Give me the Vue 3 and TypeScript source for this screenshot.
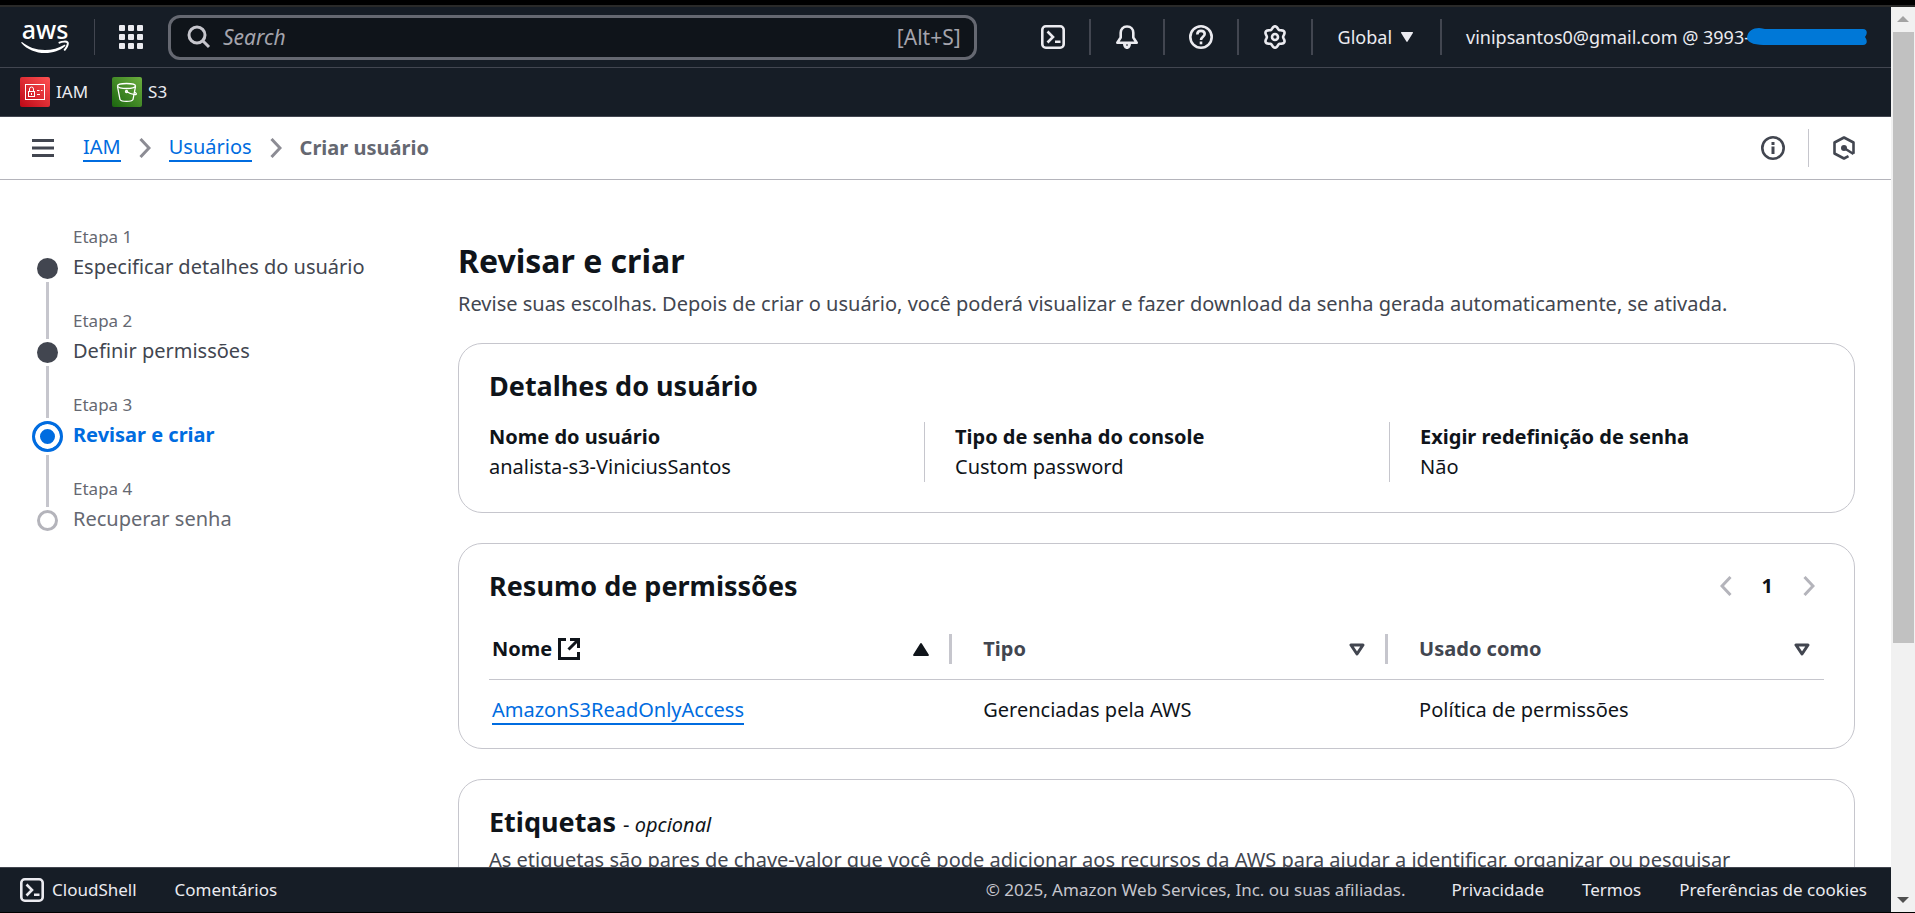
<script setup lang="ts">
import { ref } from 'vue'

interface Step {
  id: number
  label: string
  state: 'done' | 'active' | 'pending'
}

interface Field {
  label: string
  value: string
}

interface Policy {
  name: string
  type: string
  usedAs: string
}

const search = ref('')

const steps: Step[] = [
  { id: 1, label: 'Especificar detalhes do usuário', state: 'done' },
  { id: 2, label: 'Definir permissões', state: 'done' },
  { id: 3, label: 'Revisar e criar', state: 'active' },
  { id: 4, label: 'Recuperar senha', state: 'pending' },
]

const fields: Field[] = [
  { label: 'Nome do usuário', value: 'analista-s3-ViniciusSantos' },
  { label: 'Tipo de senha do console', value: 'Custom password' },
  { label: 'Exigir redefinição de senha', value: 'Não' },
]

const policies: Policy[] = [
  { name: 'AmazonS3ReadOnlyAccess', type: 'Gerenciadas pela AWS', usedAs: 'Política de permissões' },
]

// Outline of the settings cog: a circle with six soft lobes.
const cogPath = (() => {
  const points: string[] = []
  for (let a = 0; a < 360; a += 5) {
    const t = (a * Math.PI) / 180
    const r = 9.4 + 1.3 * Math.cos(6 * t)
    points.push(`${(12 + r * Math.sin(t)).toFixed(2)} ${(12 - r * Math.cos(t)).toFixed(2)}`)
  }
  return `M${points.join('L')}Z`
})()
</script>

<template>
  <div class="window">
    <div class="frame-top"></div>
    <div class="viewport">
      <div class="console">
        <header class="nav">
          <a class="logo" href="#" aria-label="AWS">
            <svg width="48" height="50" viewBox="0 -8 48 50">
              <text x="24" y="19" text-anchor="middle" class="logo-text">aws</text>
              <path d="M1 22c6 5 14 8 23 8 7 0 14-2 19-5 1-.6 2 .3 1 1.200C39 30.500 32 33 24 33 15 33 6 29.500.6 23.200c-.5-.8-.2-1.500.4-1.200z" fill="#fff" />
              <path d="M38.500 22.600c2.500-1 7-1.500 8-.3s-.6 5-2.800 7.500" fill="none" stroke="#fff" stroke-width="2" stroke-linecap="round" />
            </svg>
          </a>
          <span class="rule"></span>
          <button class="icon-btn apps" aria-label="Serviços">
            <svg width="24" height="24" viewBox="0 0 24 24" fill="#ebebf0">
              <template v-for="r in 3" :key="r">
                <rect v-for="c in 3" :key="c" :x="(c - 1) * 9" :y="(r - 1) * 9" width="6" height="6" rx="1" />
              </template>
            </svg>
          </button>
          <label class="search">
            <svg width="24" height="24" viewBox="0 0 24 24" fill="none" stroke="#c6c6cd" stroke-width="3">
              <circle cx="10" cy="10" r="8" />
              <path d="M15.500 15.500 22 22" />
            </svg>
            <input v-model="search" type="text" placeholder="Search" aria-label="Search" />
            <span>[Alt+S]</span>
          </label>
          <div class="tools">
            <button class="icon-btn" aria-label="CloudShell">
              <svg width="24" height="24" viewBox="0 0 24 24" fill="none" stroke="#ebebf0" stroke-width="2.600">
                <rect x="1.300" y="1.300" width="21.400" height="21.400" rx="3.500" />
                <path d="M6.500 6.500 12 12l-5.500 5.500M14 16.800h5.500" />
              </svg>
            </button>
            <span class="rule"></span>
            <button class="icon-btn" aria-label="Notificações">
              <svg width="24" height="24" viewBox="0 0 24 24" fill="none" stroke="#ebebf0" stroke-width="2.600" stroke-linejoin="round">
                <path d="M12 1.500c-4 0-6.300 2.700-6.300 6.300v4.700L2.300 17.700h19.400l-3.400-5.200V7.800c0-3.600-2.300-6.300-6.300-6.300z" />
                <path d="M8 18.500h8c0 3.400-1.800 5.500-4 5.500s-4-2.100-4-5.500z" fill="#ebebf0" stroke="none" />
                <path d="M11 19.500h2v1h-2z" fill="#161d26" stroke="none" />
              </svg>
            </button>
            <span class="rule"></span>
            <button class="icon-btn" aria-label="Ajuda">
              <svg width="24" height="24" viewBox="0 0 24 24" fill="none" stroke="#ebebf0" stroke-width="2.600">
                <circle cx="12" cy="12" r="10.700" />
                <path d="M8.300 9.500c0-2.300 1.500-3.600 3.700-3.600s3.700 1.300 3.700 3.200c0 2.600-3.700 2.700-3.700 5.900" />
                <path d="M12 16.500v2.800" />
              </svg>
            </button>
            <span class="rule"></span>
            <button class="icon-btn" aria-label="Configurações">
              <svg width="24" height="24" viewBox="0 0 24 24" fill="none" stroke="#ebebf0" stroke-width="2.600" stroke-linejoin="round">
                <path :d="cogPath" />
                <circle cx="12" cy="12" r="3" />
              </svg>
            </button>
            <span class="rule"></span>
          </div>
          <button class="region">
            Global
            <svg width="12" height="10" viewBox="0 0 12 10" fill="#ebebf0"><path d="M.5 0h11c.5 0 .6.5.4.900L6.600 9.500c-.3.500-.9.500-1.200 0L.1.900C-.1.500 0 0 .5 0z" /></svg>
          </button>
          <span class="rule"></span>
          <button class="account">
            vinipsantos0@gmail.com @ 3993-<svg width="120" height="20" viewBox="0 0 120 20" fill="#0078d7">
              <path d="M0 10C1 4 6 1 12 1c3 0 4 1 6 1h98c4 0 5 4 2 8 3 4 2 8-2 8H20C10 18 0 17 0 10z" />
            </svg>
          </button>
        </header>

        <nav class="favorites" aria-label="Favoritos">
          <a href="#">
            <svg width="30" height="30" viewBox="0 0 30 30">
              <defs>
                <linearGradient id="fav-iam" x1="0" y1="1" x2="1" y2="0">
                  <stop offset="0" stop-color="#bd0816" />
                  <stop offset="1" stop-color="#ff5252" />
                </linearGradient>
              </defs>
              <rect width="30" height="30" rx="2" fill="url(#fav-iam)" />
              <g fill="none" stroke="#fff">
                <rect x="5.500" y="7.500" width="19" height="15" />
                <rect x="8.500" y="14.500" width="6" height="5" />
                <path d="M9.500 14v-2a2 2 0 0 1 4 0v2M17 13.500h2.500M21 13.500h1.500M17 17.500h3M11.500 16v2" />
              </g>
            </svg>
            IAM
          </a>
          <a href="#">
            <svg width="30" height="30" viewBox="0 0 30 30">
              <defs>
                <linearGradient id="fav-s3" x1="0" y1="1" x2="1" y2="0">
                  <stop offset="0" stop-color="#1b660f" />
                  <stop offset="1" stop-color="#6cae3e" />
                </linearGradient>
              </defs>
              <rect width="30" height="30" rx="2" fill="url(#fav-s3)" />
              <g fill="none" stroke="#fff" stroke-width="1.300">
                <ellipse cx="14.500" cy="9" rx="9" ry="2.500" />
                <path d="M5.500 9.500 8 22.500c1.500 2.500 11.500 2.500 13 0l2.500-13" />
                <path d="M14.500 14.500c3 2 6 3.500 9.500 3 1-.8-.5-2-2-2.500" />
                <circle cx="14.500" cy="14.500" r="1" />
              </g>
            </svg>
            S3
          </a>
        </nav>

        <div class="crumbs">
          <button class="icon-btn menu" aria-label="Abrir navegação">
            <svg width="22" height="18" viewBox="0 0 22 18" stroke="#424650" stroke-width="3"><path d="M0 1.500h22M0 9h22M0 16.500h22" /></svg>
          </button>
          <a href="#">IAM</a>
          <svg class="sep" width="12" height="20" viewBox="0 0 12 20"><path d="m1.500 1 8.500 9-8.500 9" /></svg>
          <a href="#">Usuários</a>
          <svg class="sep" width="12" height="20" viewBox="0 0 12 20"><path d="m1.500 1 8.500 9-8.500 9" /></svg>
          <strong>Criar usuário</strong>
          <div class="crumb-tools">
            <button class="icon-btn" aria-label="Informações">
              <svg width="24" height="24" viewBox="0 0 24 24" fill="none" stroke="#424650" stroke-width="2.600">
                <circle cx="12" cy="12" r="10.700" />
                <path d="M12 6v3M12 10.500v7.500" stroke-width="3" />
              </svg>
            </button>
            <span></span>
            <button class="icon-btn" aria-label="Recursos">
              <svg width="24" height="24" viewBox="0 0 24 24" fill="none" stroke="#424650" stroke-width="2.600" stroke-linejoin="round">
                <path d="M21.500 17.800V6.500L12 1.500l-9.500 5v11l9.500 5 4.500-2.300" />
                <path d="m12 12 9.500 6" />
                <circle cx="12" cy="12" r="3" fill="#424650" stroke="none" />
              </svg>
            </button>
          </div>
        </div>

        <div class="body">
          <ol class="steps">
            <li v-for="step in steps" :key="step.id" :class="step.state">
              <div class="marker">
                <span class="dot"></span>
                <span class="line"></span>
              </div>
              <div>
                <p class="step-no">Etapa {{ step.id }}</p>
                <a v-if="step.state === 'done'" class="step-label" href="#">{{ step.label }}</a>
                <p v-else class="step-label">{{ step.label }}</p>
              </div>
            </li>
          </ol>

          <main>
            <h1>Revisar e criar</h1>
            <p class="lead">Revise suas escolhas. Depois de criar o usuário, você poderá visualizar e fazer download da senha gerada automaticamente, se ativada.</p>

            <section class="card details">
              <h2>Detalhes do usuário</h2>
              <dl>
                <div v-for="field in fields" :key="field.label">
                  <dt>{{ field.label }}</dt>
                  <dd>{{ field.value }}</dd>
                </div>
              </dl>
            </section>

            <section class="card summary">
              <div class="card-head">
                <h2>Resumo de permissões</h2>
                <div class="pager">
                  <button aria-label="Página anterior" disabled>
                    <svg class="page-icon" width="12" height="20" viewBox="0 0 12 20"><path d="M10.500 1 2 10l8.500 9" /></svg>
                  </button>
                  <button aria-current="page">1</button>
                  <button aria-label="Próxima página" disabled>
                    <svg class="page-icon" width="12" height="20" viewBox="0 0 12 20"><path d="m1.500 1 8.500 9-8.500 9" /></svg>
                  </button>
                </div>
              </div>
              <table>
                <thead>
                  <tr>
                    <th class="sorted">
                      <button>
                        <span class="th-text">Nome
                          <svg width="22" height="22" viewBox="0 0 22 22" fill="none" stroke="#0f141a" stroke-width="3">
                            <path d="M8 1.500H1.500v19h19V14M12 1.500h8.500V10M20.500 1.500 10.500 11.500" />
                          </svg>
                        </span>
                        <svg width="16" height="13" viewBox="0 0 16 13" fill="#0f141a"><path d="M7.200.6.300 11.600c-.5.700 0 1.400.7 1.400h14c.7 0 1.200-.7.700-1.400L8.800.6c-.4-.7-1.200-.7-1.600 0z" /></svg>
                      </button>
                    </th>
                    <th>
                      <button>
                        <span class="th-text">Tipo</span>
                        <svg width="16" height="13" viewBox="0 0 16 13" fill="none" stroke="#424650" stroke-width="3" stroke-linejoin="round"><path d="M2 2h12l-6 9z" /></svg>
                      </button>
                    </th>
                    <th>
                      <button>
                        <span class="th-text">Usado como</span>
                        <svg width="16" height="13" viewBox="0 0 16 13" fill="none" stroke="#424650" stroke-width="3" stroke-linejoin="round"><path d="M2 2h12l-6 9z" /></svg>
                      </button>
                    </th>
                  </tr>
                </thead>
                <tbody>
                  <tr v-for="policy in policies" :key="policy.name">
                    <td><a href="#">{{ policy.name }}</a></td>
                    <td>{{ policy.type }}</td>
                    <td>{{ policy.usedAs }}</td>
                  </tr>
                </tbody>
              </table>
            </section>

            <section class="card tags">
              <h2>Etiquetas <span>- <em>opcional</em></span></h2>
              <p>As etiquetas são pares de chave-valor que você pode adicionar aos recursos da AWS para ajudar a identificar, organizar ou pesquisar</p>
            </section>
          </main>
        </div>

        <footer>
          <button class="shell">
            <svg width="24" height="24" viewBox="0 0 24 24" fill="none" stroke="#ebebf0" stroke-width="2.600">
              <rect x="1.300" y="1.300" width="21.400" height="21.400" rx="3.500" />
              <path d="M6.500 6.500 12 12l-5.500 5.500M14 16.800h5.500" />
            </svg>
            CloudShell
          </button>
          <a href="#">Comentários</a>
          <small>© 2025, Amazon Web Services, Inc. ou suas afiliadas.</small>
          <a href="#">Privacidade</a>
          <a href="#">Termos</a>
          <a href="#">Preferências de cookies</a>
        </footer>
      </div>

      <div class="scrollbar" aria-hidden="true">
        <svg width="24" height="24" viewBox="0 0 24 24" fill="#a3a3a3"><path d="m12 9 6 6H6z" /></svg>
        <span class="thumb"></span>
        <svg width="24" height="24" viewBox="0 0 24 24" fill="#505050"><path d="m12 15 6-6H6z" /></svg>
      </div>
    </div>
  </div>
</template>

<style>
body {
  margin: 0;
}
</style>

<style scoped>
.window,
.window * {
  box-sizing: border-box;
}
.window {
  display: flex;
  flex-direction: column;
  height: 100vh;
  border-bottom: 1px solid #000;
  background: #fff;
  color: #0f141a;
  font: 20px/30px "Noto Sans", "Open Sans", sans-serif;
}
.window button,
.window input {
  padding: 0;
  border: 0;
  background: none;
  color: inherit;
  font: inherit;
}
p, h1, h2, dl, dd, ol {
  margin: 0;
  padding: 0;
}
svg {
  flex: none;
  display: block;
}
a {
  color: inherit;
  text-decoration: none;
}
.frame-top {
  flex: none;
  height: 7px;
  border-bottom: 2px solid #2a2a29;
  background: #000;
}
.viewport {
  flex: 1;
  min-height: 0;
  display: flex;
}
.console {
  flex: 1;
  min-width: 0;
  display: flex;
  flex-direction: column;
}
.icon-btn {
  flex: none;
  display: flex;
}

.nav {
  flex: none;
  display: flex;
  align-items: center;
  height: 61px;
  padding: 0 24px 0 21px;
  border-bottom: 1px solid #424650;
  background: #161d26;
  color: #ebebf0;
  font-size: 18px;
}
.logo-text {
  fill: #fff;
  font-size: 25px;
  font-weight: 500;
}
.rule {
  flex: none;
  width: 2px;
  height: 36px;
  background: #424650;
}
.logo + .rule {
  width: 1px;
  margin: 0 24px 0 25px;
}
.search {
  flex: 1;
  min-width: 0;
  display: flex;
  align-items: center;
  gap: 12px;
  height: 45px;
  margin-left: 25px;
  padding: 0 13px 0 16px;
  border: 3px solid #656871;
  border-radius: 12px;
  background: #0f141a;
  color: #a4a4ad;
  font-size: 21px;
}
.search input {
  flex: 1;
  min-width: 0;
  outline: 0;
}
.search input::placeholder {
  color: #a4a4ad;
  font-style: italic;
  opacity: 1;
}
.tools {
  display: flex;
  align-items: center;
  gap: 24px;
  margin-left: 64px;
}
.region {
  display: flex;
  align-items: center;
  gap: 9px;
}
.window .region {
  margin: 0 27px 0 25px;
}
.account {
  display: flex;
  align-items: center;
  margin-left: 24px;
  white-space: nowrap;
}
.account svg {
  margin-left: -3px;
}

.favorites {
  flex: none;
  display: flex;
  align-items: center;
  gap: 24px;
  height: 49px;
  padding: 0 20px;
  border-bottom: 1px solid #424650;
  background: #161d26;
  color: #ebebf0;
  font-size: 17px;
}
.favorites a {
  display: flex;
  align-items: center;
  gap: 6px;
}

.crumbs {
  flex: none;
  display: flex;
  align-items: center;
  gap: 18px;
  height: 63px;
  padding: 0 35px 0 32px;
  border-bottom: 1px solid #b4b4bb;
  color: #656871;
}
.crumbs .menu {
  margin-right: 11px;
}
.crumbs a,
td a {
  border-bottom: 2px solid #006ce0;
  color: #006ce0;
  line-height: 26px;
}
.sep,
.page-icon {
  fill: none;
  stroke: #8c8c94;
  stroke-width: 3;
}
.crumb-tools {
  display: flex;
  align-items: center;
  gap: 23px;
  margin-left: auto;
}
.crumb-tools span {
  width: 1px;
  height: 38px;
  background: #c6c6cd;
}

.body {
  flex: 1;
  min-height: 0;
  display: grid;
  grid-template-columns: 366px minmax(0, 1fr);
  gap: 60px;
  padding: 0 36px 0 32px;
  overflow: hidden;
}
.steps {
  padding-top: 42px;
  list-style: none;
}
.steps li {
  display: flex;
  gap: 10px;
  height: 84px;
}
.marker {
  flex: none;
  display: flex;
  flex-direction: column;
  align-items: center;
  width: 31px;
  padding-top: 30px;
}
.dot {
  flex: none;
  width: 21px;
  height: 21px;
  margin: 6px 0 3px;
  border-radius: 50%;
  background: #424650;
}
.line {
  flex: 1;
  width: 3px;
  margin-bottom: -33px;
  background: #c6c6cd;
}
li:has(+ .active) .line {
  margin-bottom: -28px;
}
li:last-child .line {
  display: none;
}
.active .dot {
  width: 31px;
  height: 31px;
  margin-top: 1px;
  border: 3px solid #006ce0;
  background: #006ce0;
  box-shadow: inset 0 0 0 5px #fff;
}
.pending .dot {
  border: 3px solid #b4b4bb;
  background: #fff;
}
.step-no {
  color: #656871;
  font-size: 17px;
}
.step-label {
  color: #424650;
}
.active .step-label {
  color: #006ce0;
  font-weight: 700;
}
.pending .step-label {
  color: #656871;
}

h1 {
  padding-top: 60px;
  font-size: 32px;
  line-height: 42px;
}
h2 {
  font-size: 27px;
  line-height: 36px;
}
.lead {
  margin: 7px 0 24px;
  color: #424650;
}
.card {
  border: 1px solid #c6c6cd;
  border-radius: 24px;
}
.card + .card {
  margin-top: 30px;
}
.card h2 {
  padding: 24px 30px 0;
}
.details dl {
  display: grid;
  grid-template-columns: repeat(3, 1fr);
  margin: 18px 0 30px;
}
.details dl div {
  padding-left: 30px;
}
.details dl div + div {
  border-left: 1px solid #c6c6cd;
}
dt {
  font-weight: 700;
}
.card-head {
  display: flex;
  justify-content: space-between;
}
.pager {
  display: flex;
  align-items: center;
  gap: 30px;
  padding: 24px 39px 0 0;
  font-weight: 700;
}
.page-icon {
  stroke: #b4b4bb;
}
table {
  width: calc(100% - 60px);
  margin: 16px 30px 8px;
  border-collapse: collapse;
  table-layout: fixed;
}
th {
  height: 59px;
  padding: 0;
  border-bottom: 1px solid #c6c6cd;
  color: #424650;
  text-align: left;
}
th button {
  display: flex;
  align-items: center;
  justify-content: space-between;
  width: 100%;
  height: 30px;
}
.window th button {
  padding: 0 20px 0 31px;
  border-right: 3px solid #c6c6cd;
  font-weight: 700;
}
.window th.sorted button {
  padding-left: 3px;
}
.window th:last-child button {
  padding-right: 14px;
  border-right: 0;
}
th.sorted {
  width: 34.7%;
  color: #0f141a;
}
.th-text {
  display: flex;
  align-items: center;
  gap: 6px;
}
td {
  height: 61px;
  padding: 0 31px;
}
td:first-child {
  padding-left: 3px;
}
td a {
  display: inline-block;
}
.tags h2 span {
  font-size: 20px;
  font-weight: 400;
}
.tags p {
  padding: 2px 30px 30px;
  color: #424650;
}

footer {
  flex: none;
  display: flex;
  align-items: center;
  gap: 38px;
  height: 45px;
  padding: 0 24px 0 20px;
  border-top: 1px solid #424650;
  background: #161d26;
  color: #ebebf0;
  font-size: 17px;
}
.shell {
  display: flex;
  align-items: center;
  gap: 8px;
}
footer small {
  margin: 0 8px 0 auto;
  color: #c6c6cd;
  font-size: 17px;
}

.scrollbar {
  flex: none;
  display: flex;
  flex-direction: column;
  width: 24px;
  background: #f1f1f1;
}
.thumb {
  flex: none;
  height: 67.5%;
  margin: 1px 1px auto 2px;
  background: #c1c1c1;
}
</style>
